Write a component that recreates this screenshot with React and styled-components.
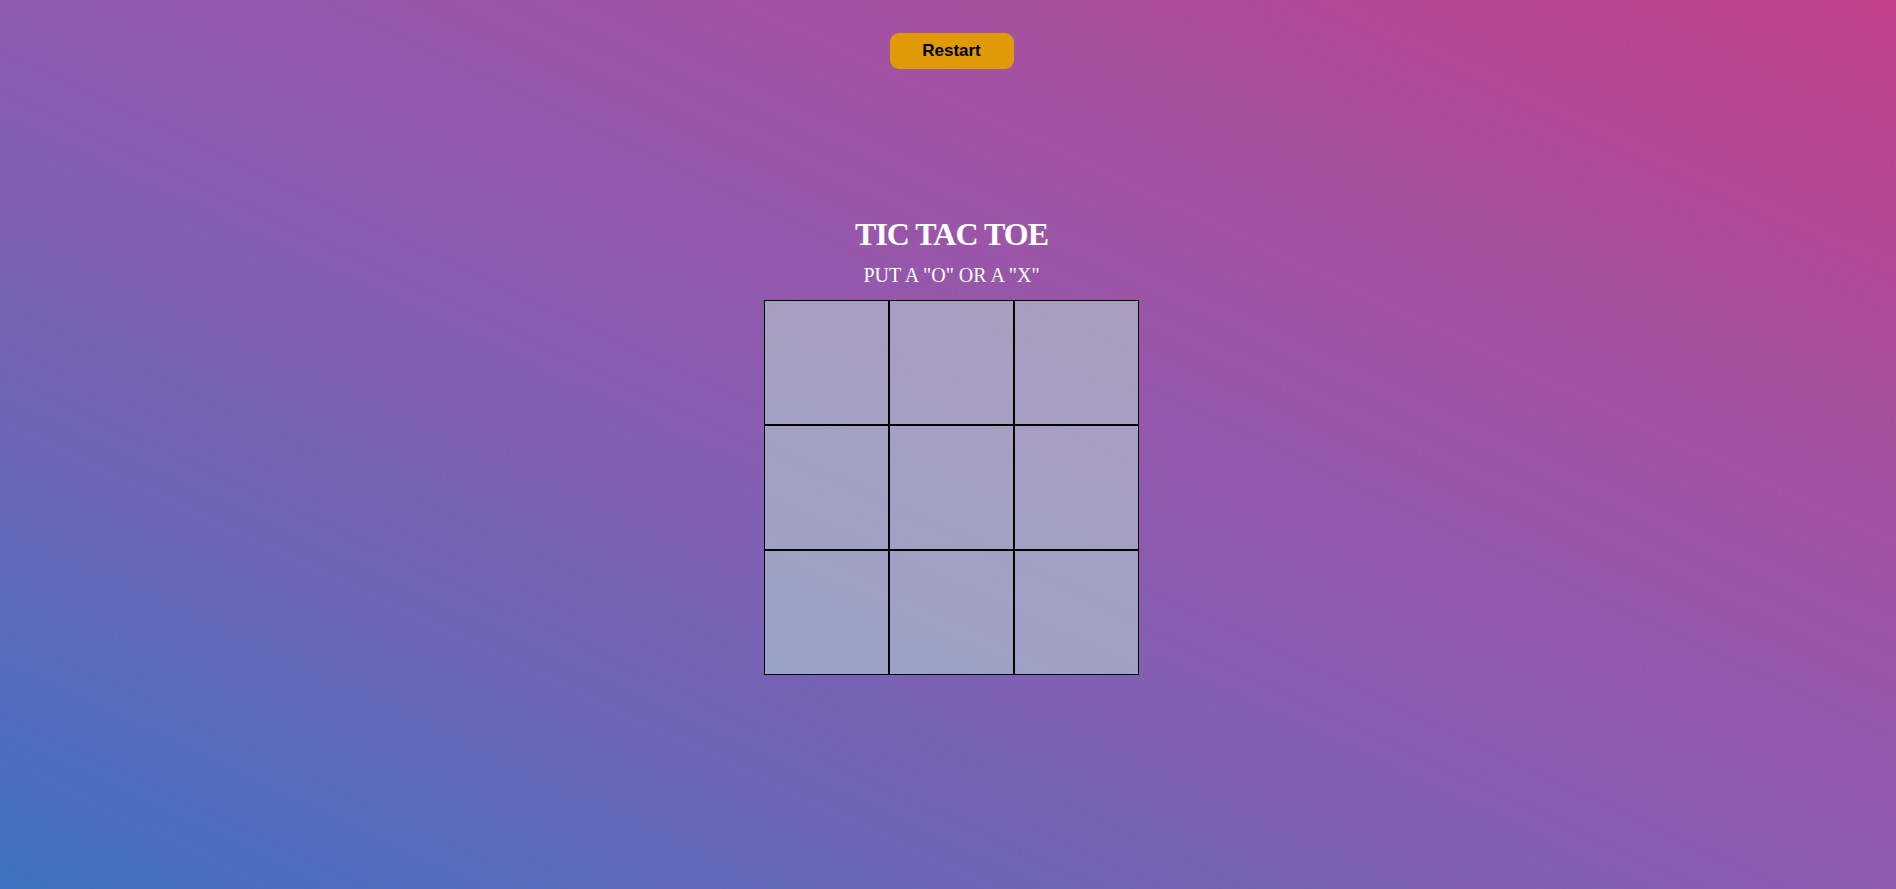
import React, { useState } from 'react';
import styled, { createGlobalStyle } from 'styled-components';

const GlobalStyle = createGlobalStyle`
  html, body {
    margin: 0;
    padding: 0;
    min-height: 100%;
  }
  body {
    font-family: "Liberation Serif", "Times New Roman", serif;
    background: linear-gradient(to top right, #3e72c0 0%, #6c66b8 25%, #8e5bb0 50%, #a650a0 75%, #c2408a 100%);
    background-attachment: fixed;
    min-height: 100vh;
  }
`;

const Page = styled.div`
  display: flex;
  flex-direction: column;
  align-items: center;
  padding: 33px 0 0 7px;
  min-height: 100vh;
  box-sizing: border-box;
`;

const RestartButton = styled.button`
  width: 124px;
  height: 36px;
  border: none;
  border-radius: 9px;
  background-color: #e09a08;
  color: #000;
  font-family: "Liberation Sans", Arial, sans-serif;
  font-weight: bold;
  font-size: 17px;
  cursor: pointer;
`;

const Title = styled.h1`
  margin: 147px 0 0;
  font-size: 32px;
  line-height: 36px;
  letter-spacing: -1px;
  font-weight: bold;
  color: #fff;
`;

const Subtitle = styled.p`
  margin: 12px 0 0;
  font-size: 20px;
  line-height: 22px;
  color: #fff;
`;

const Board = styled.div`
  margin-top: 14px;
  display: grid;
  grid-template-columns: repeat(3, 125px);
  grid-template-rows: repeat(3, 125px);
`;

const Cell = styled.div`
  box-sizing: border-box;
  border: 1px solid #000;
  background-color: rgba(188, 228, 214, 0.5);
  display: flex;
  align-items: center;
  justify-content: center;
  font-size: 64px;
  color: #fff;
  cursor: pointer;
`;

export default function App() {
  const [cells, setCells] = useState(Array(9).fill(''));
  const [turn, setTurn] = useState('O');

  const play = (i) => {
    if (cells[i]) return;
    const next = [...cells];
    next[i] = turn;
    setCells(next);
    setTurn(turn === 'O' ? 'X' : 'O');
  };

  const restart = () => {
    setCells(Array(9).fill(''));
    setTurn('O');
  };

  return (
    <>
      <GlobalStyle />
      <Page>
        <RestartButton onClick={restart}>Restart</RestartButton>
        <Title>TIC TAC TOE</Title>
        <Subtitle>PUT A "O" OR A "X"</Subtitle>
        <Board>
          {cells.map((c, i) => (
            <Cell key={i} onClick={() => play(i)}>{c}</Cell>
          ))}
        </Board>
      </Page>
    </>
  );
}
